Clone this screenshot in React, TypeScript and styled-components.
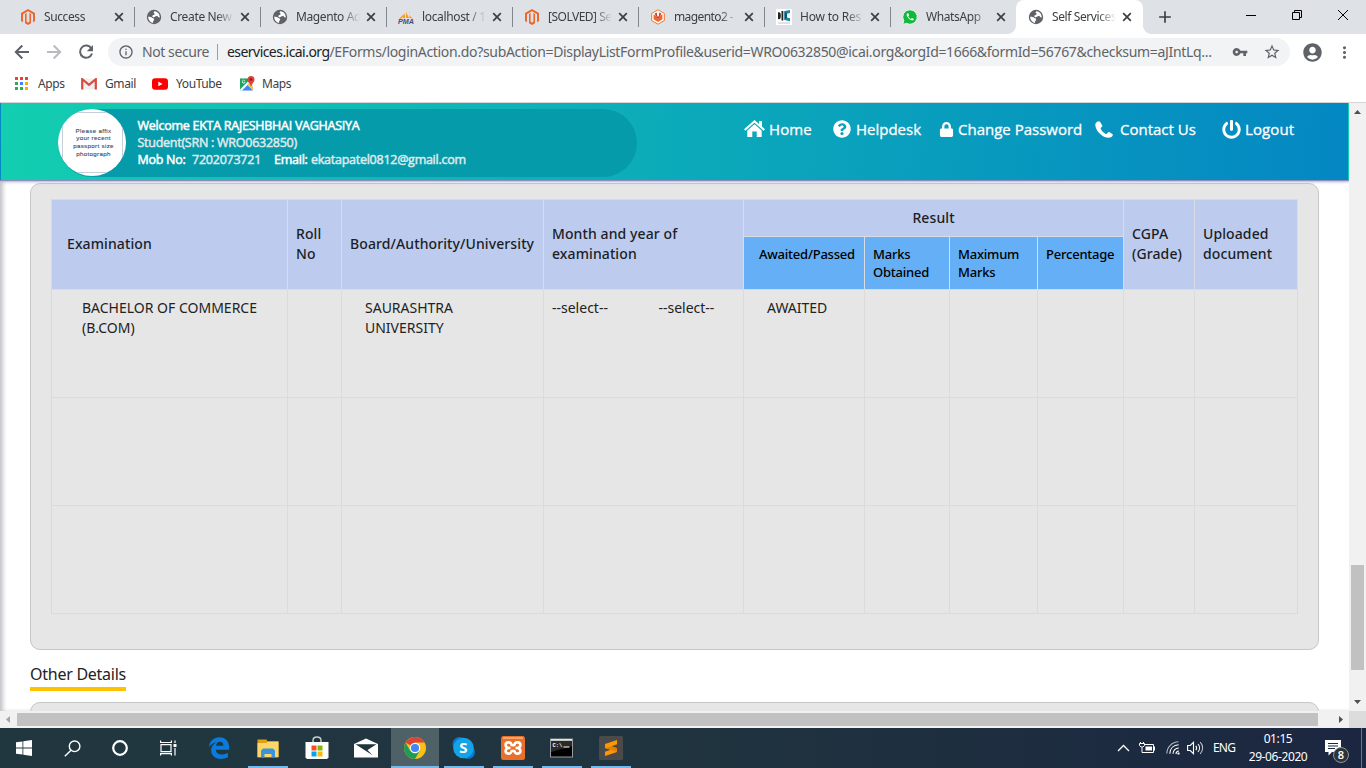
import React from 'react';
import styled, { createGlobalStyle, css } from 'styled-components';
import {
  MdVpnKey, MdStarBorder, MdMoreVert,
  MdInfoOutline, MdAdd,
} from 'react-icons/md';
import { FaQuestionCircle, FaLock, FaPowerOff, FaUserCircle } from 'react-icons/fa';

const Global = createGlobalStyle`
  * { box-sizing: border-box; }
  body { margin: 0; overflow: hidden; background: #fff; font-family: "Noto Sans", "Open Sans", sans-serif; }
  svg { display: block; flex: none; }
`;

const Screen = styled.div`
  width: 1366px;
  height: 768px;
  display: flex;
  flex-direction: column;
  overflow: hidden;
`;

/* ---------- browser chrome ---------- */

const TabStrip = styled.div`
  height: 34px;
  flex: none;
  display: flex;
  background: #dee1e6;
  padding-left: 9px;
`;

const Tab = styled.div<{ $active?: boolean; $beforeActive?: boolean }>`
  width: 126px;
  display: flex;
  align-items: center;
  padding: 0 0 0 11px;
  position: relative;
  ${p => !p.$active && !p.$beforeActive && css`
    &::after {
      content: '';
      width: 1px;
      height: 20px;
      margin-left: 10px;
      background: #80868b;
    }
  `}
  ${p => p.$active && css`
    width: 127px;
    margin-left: -1px;
    padding-left: 12px;
    background: #fff;
    border-radius: 8px 8px 0 0;
    &::before, &::after {
      content: '';
      position: absolute;
      bottom: 0;
      width: 8px;
      height: 8px;
    }
    &::before { left: -8px; background: radial-gradient(circle at 0 0, #dee1e6 7.5px, #fff 8px); }
    &::after { right: -8px; background: radial-gradient(circle at 100% 0, #dee1e6 7.5px, #fff 8px); }
  `}
`;

const TabTitle = styled.span<{ $ls?: number }>`
  width: 64px;
  flex: none;
  margin-left: 8px;
  overflow: hidden;
  white-space: nowrap;
  font-size: 12px;
  line-height: 18px;
  letter-spacing: ${p => p.$ls ?? -0.4}px;
  color: #3c4043;
  mask-image: linear-gradient(90deg, #000 72%, transparent 100%);
`;

const TabClose = styled.span`
  flex: none;
  margin-left: 6px;
`;

const NewTab = styled.div`
  display: flex;
  align-items: center;
  padding-left: 12px;
  color: #3c4043;
`;

const WindowButtons = styled.div`
  margin-left: auto;
  display: flex;
  align-items: center;
  height: 29px;
  gap: 34px;
  padding-right: 17px;
`;

const Toolbar = styled.div`
  height: 34px;
  flex: none;
  display: flex;
  align-items: center;
  padding: 2px 12px 0 14px;
  color: #5f6368;
`;

const NavButtons = styled.div`
  display: flex;
  gap: 16px;
  width: 94px;
`;

const Omnibox = styled.div`
  width: 1182px;
  height: 28px;
  border-radius: 14px;
  background: #f1f3f4;
  display: flex;
  align-items: center;
  padding: 0 9px 1px 10px;
  font-size: 14px;
  white-space: nowrap;
`;

const Security = styled.span`
  margin-left: 8px;
  width: 75px;
  letter-spacing: -0.42px;
`;

const OmniDivider = styled.span`
  width: 1px;
  height: 16px;
  background: #9aa0a6;
  margin-right: 9px;
`;

const Host = styled.span`
  color: #202124;
  letter-spacing: -0.55px;
`;

const Path = styled.span`
  letter-spacing: -0.32px;
  flex: 1;
`;

const OmniActions = styled.span`
  display: flex;
  align-items: center;
  gap: 15px;
`;

const ToolbarEnd = styled.div`
  display: flex;
  align-items: center;
  margin-left: 13px;
  gap: 13px;
`;

const Bookmarks = styled.div`
  height: 35px;
  flex: none;
  display: flex;
  align-items: center;
  padding: 0 0 3px 15px;
  border-bottom: 1px solid #d5d6d8;
`;

const Bookmark = styled.div<{ $w: number }>`
  width: ${p => p.$w}px;
  display: flex;
  align-items: center;
  font-size: 12px;
  letter-spacing: -0.4px;
  color: #3c4043;
`;

const BookmarkLabel = styled.span<{ $gap: number }>`
  margin-left: ${p => p.$gap}px;
`;

/* ---------- page ---------- */

const Viewport = styled.div`
  height: 608px;
  flex: none;
  display: flex;
`;

const Page = styled.div`
  width: 1349px;
  height: 608px;
  overflow: hidden;
  background: #fff;
  box-shadow: inset 4px 0 4px -1px #c4c4c8;
`;

const Banner = styled.header`
  height: 77px;
  display: flex;
  border: solid transparent;
  border-width: 0 1px;
  background: linear-gradient(96deg, #13ceb0 0%, #0487c3 100%);
  box-shadow: 0 1px 1px #8c8fbb, 0 2px 3px #b9bbdd;
  position: relative;
  font-family: "Open Sans", sans-serif;
`;

const ProfilePill = styled.div`
  width: 579px;
  height: 68px;
  margin: 6px 0 0 57px;
  border-radius: 34px;
  background: #069bab;
  display: flex;
`;

const Photo = styled.div`
  width: 68px;
  height: 67px;
  border-radius: 50%;
  background: #fff;
  display: flex;
  align-items: center;
  justify-content: center;
  text-align: center;
  overflow: hidden;
`;

const PhotoFrame = styled.div`
  width: 61px;
  height: 61px;
  flex: none;
  border: 1px solid #c5cedb;
  display: flex;
  align-items: center;
  justify-content: center;
  padding: 0 0 1px 3px;
  white-space: nowrap;
  font: 6.2px/7.7px "Liberation Sans", sans-serif;
  letter-spacing: 0.33px;
  color: #3a475c;
  -webkit-text-stroke: 0.1px #3a475c;
`;

const Identity = styled.div`
  margin: 7.5px 0 0 11.5px;
  font-size: 12.5px;
  line-height: 17px;
  letter-spacing: -0.26px;
  color: #dfe9ec;
  -webkit-text-stroke: 0.5px currentColor;
  white-space: nowrap;
`;

const Strong = styled.span<{ $before?: number; $after?: number }>`
  color: #fff;
  margin-left: ${p => p.$before ?? 0}px;
  margin-right: ${p => p.$after ?? 0}px;
`;

const Digits = styled.span`
  letter-spacing: -0.25px;
`;

const Menu = styled.nav`
  flex: 1;
  display: flex;
  padding: 15px 0 0 107px;
  height: 37px;
  align-items: center;
  color: #fff;
  font-size: 15px;
  line-height: 22px;
`;

const MenuItem = styled.a<{ $w: number; $gap: number; $ls?: number }>`
  width: ${p => p.$w}px;
  display: flex;
  align-items: center;
  gap: ${p => p.$gap}px;
  letter-spacing: ${p => p.$ls ?? 0}px;
  white-space: nowrap;
  -webkit-text-stroke: 0.3px #fff;
`;

const Panel = styled.section`
  width: 1289px;
  height: 467px;
  margin: 3px 0 0 30px;
  padding: 15px 20px 0;
  border: 1px solid #c6c6c6;
  border-radius: 10px;
  background: #e6e6e6;
`;

const NextPanel = styled(Panel)`
  margin-top: 11px;
`;

const Table = styled.div`
  width: 1247px;
  display: grid;
  grid-template-columns: 236px 54px 202px 200px 121px 85px 88px 86px 71px 103px;
  grid-template-rows: 37px 53px repeat(3, 108px);
  border: solid #d9dadb;
  border-width: 1px 0 0 1px;
  font-size: 14px;
  line-height: 20px;
`;

const Cell = styled.div<{ $pad?: number }>`
  border: solid #dbdbdb;
  border-width: 0 1px 1px 0;
  padding: 8px 8px 0 ${p => p.$pad ?? 8}px;
  color: #222;
`;

const HeadCell = styled(Cell)<{ $col: number }>`
  grid-row: 1 / span 2;
  grid-column: ${p => p.$col};
  display: flex;
  align-items: center;
  padding-top: 0;
  padding-bottom: 1px;
  background: #bdccee;
  border-color: #d9dce2;
  color: #1b1e26;
  font-weight: 500;
  letter-spacing: 0.1px;
`;

const GroupCell = styled(HeadCell)`
  grid-row: 1;
  grid-column: ${p => p.$col} / span 4;
  padding-bottom: 0;
  justify-content: center;
`;

const SubCell = styled(Cell)<{ $col: number }>`
  grid-row: 2;
  grid-column: ${p => p.$col};
  background: #64aff5;
  border-color: #d9dce2;
  padding-top: 8px;
  font-size: 13px;
  line-height: 18px;
  font-weight: 500;
  letter-spacing: -0.22px;
  color: #000;
`;

const DateCell = styled(Cell)`
  display: flex;
  gap: 50.5px;
`;

const SectionTitle = styled.h2`
  display: block;
  width: 96px;
  height: 30px;
  margin: 11px 0 0 30px;
  padding-top: 1px;
  border-bottom: 4px solid #ffc200;
  font-size: 16px;
  line-height: 24px;
  font-weight: 400;
  letter-spacing: -0.26px;
  color: #222;
  white-space: nowrap;
`;

const ScrollV = styled.div`
  width: 17px;
  height: 608px;
  background: #f1f1f1;
  display: flex;
  flex-direction: column;
  align-items: center;
  padding: 7px 0;
`;

const ThumbV = styled.div`
  width: 13px;
  height: 105px;
  margin-top: 451px;
  background: #c1c1c1;
`;

const ScrollH = styled.div`
  height: 17px;
  flex: none;
  background: #f1f1f1;
  display: flex;
  align-items: center;
  padding-left: 6px;
`;

const ThumbH = styled.div`
  width: 1301px;
  height: 13px;
  margin-left: 7px;
  background: #c1c1c1;
`;

const Corner = styled.div`
  width: 17px;
  height: 17px;
  margin-left: auto;
  background: #dcdcdc;
`;

const Arrow = styled.i<{ $dir: 'up' | 'down' | 'left' | 'right'; $dim?: boolean }>`
  flex: none;
  width: ${p => (p.$dir === 'up' || p.$dir === 'down' ? 7 : 4)}px;
  height: ${p => (p.$dir === 'up' || p.$dir === 'down' ? 4 : 7)}px;
  background: ${p => (p.$dim ? '#a3a3a3' : '#505050')};
  clip-path: ${p => ({
    up: 'polygon(50% 0, 100% 100%, 0 100%)',
    down: 'polygon(0 0, 100% 0, 50% 100%)',
    left: 'polygon(0 50%, 100% 0, 100% 100%)',
    right: 'polygon(0 0, 100% 50%, 0 100%)',
  }[p.$dir])};
`;

const DownArrow = styled(Arrow)`
  margin-top: auto;
`;

const RightArrow = styled(Arrow)`
  margin-left: 21px;
`;

/* ---------- taskbar ---------- */

const Taskbar = styled.div`
  height: 40px;
  flex: none;
  display: flex;
  background: linear-gradient(90deg, #21373f 0%, #20343f 50%, #1c2a40 85%, #1b2741 100%);
  color: #fff;
`;

const SystemKeys = styled.div`
  width: 195px;
  display: flex;
`;

const TaskSlot = styled.div<{ $open?: boolean; $active?: boolean }>`
  width: 48px;
  height: 40px;
  display: flex;
  align-items: center;
  justify-content: center;
  background:
    linear-gradient(#76b9ed, #76b9ed) center bottom / ${p => (p.$active ? 48 : p.$open ? 40 : 0)}px 2px no-repeat,
    ${p => (p.$active ? '#4d6167' : 'transparent')};
`;

const Apps = styled.div`
  display: flex;
  gap: 1px;
`;

const Tray = styled.div`
  margin-left: auto;
  display: flex;
  align-items: center;
  font-size: 12px;
  line-height: 18px;
`;

const TrayIcons = styled.div`
  display: grid;
  grid-template-columns: 22px 27px 21px 17px;
  align-items: center;
`;

const Lang = styled.span`
  width: 35px;
  margin-left: 9px;
  letter-spacing: -0.8px;
`;

const Clock = styled.div`
  width: 61px;
  text-align: center;
  letter-spacing: -0.4px;
  margin: -1px 0.5px 0 -0.5px;
`;

const Notifications = styled.div`
  position: relative;
  width: 36px;
  height: 40px;
  margin-left: 16px;
  padding-top: 12px;
`;

const Badge = styled.span`
  position: absolute;
  left: 8px;
  top: 19px;
  width: 16px;
  height: 16px;
  border-radius: 50%;
  border: 1px solid #92979c;
  background: #2e3338;
  font-size: 11px;
  line-height: 14px;
  font-weight: 600;
  text-align: center;
`;

const ShowDesktop = styled.div`
  width: 5px;
  height: 40px;
  border-left: 1px solid #6c7482;
`;

/* ---------- drawings ---------- */

const Magento = () => (
  <svg width="16" height="16" viewBox="0 0 16 16" fill="#ee672f">
    <path d="M8 0 1 4v8l2 1.200V5.200L8 2.300l5 2.900v8l2-1.200V4z" />
    <path d="M5 4.900v9.400L8 16l3-1.700V4.900L9.400 4v8.700L8 13.600l-1.400-.9V4z" />
  </svg>
);
const Pma = () => (
  <svg width="16" height="16" viewBox="0 0 16 16">
    <path d="M7 1c.5 3-.4 6-4 8.600L7 9zM8 3l3 6H8zM11.500 2c-.6 3-.2 5 3.500 7.500l-3.500-.4zM1 9.800 6 5 4.700 9.500z" fill="#f79a1c" />
    <text x="0" y="15.400" fontFamily="Liberation Sans, sans-serif" fontSize="6.600" fontWeight="700" fontStyle="italic" fill="#4a4a72" textLength="16" lengthAdjust="spacingAndGlyphs">PMA</text>
  </svg>
);
const Hexagon = () => (
  <svg width="16" height="16" viewBox="0 0 16 16">
    <path d="M8 .8 14.300 4.400v7.200L8 15.200 1.700 11.600V4.400z" fill="#fff" stroke="#f0752c" strokeWidth="1" />
    <path d="M3.600 5.300 6 6.800 8 10.500l2-3.700 2.400-1.500v4.900L8 13l-4.400-2.800z" fill="#f0652a" />
    <path d="M4.600 4.400 6.800 3.400 7 6.500 8 8l1-1.500.2-3.100 2.200 1L8 10.500z" fill="#c93a24" />
  </svg>
);
const DcLogo = () => (
  <svg width="16" height="16" viewBox="0 0 16 16">
    <path d="M0 0h16v16H0z" fill="#fff" />
    <path d="M2 3.500c2-.8 2.800.5 2.800 3.300S4 10.800 2 10zM5.500 2H7.300v9.500H5.500z" fill="#222" />
    <path d="M8.500 2 14 1v3l-3 .7v3.800l3 .8v3l-5.500-1.300z" fill="#1788ab" /><path d="M8.500 2 11 4.700v3.800L8.500 11z" fill="#0b5772" />
    <path d="M2 14h12" stroke="#c5c5c5" />
  </svg>
);
const WhatsApp = () => (
  <svg width="16" height="16" viewBox="0 0 16 16">
    <path d="M8 .8a7.200 7.200 0 1 1-3.500 13.500L.8 15.400l1-3.700A7.200 7.200 0 0 1 8 .8z" fill="#12b83c" stroke="#fff" strokeWidth=".8" />
    <path d="M5.500 4.200c-.9.500-1.100 1.600-.5 2.800 1 2.100 2.500 3.600 4.500 4.300 1 .3 2.200-.2 2.400-1.300l-2-1.100-1 1c-1.300-.6-2-1.400-2.600-2.500l.8-.9-.8-2.200z" fill="#fff" />
  </svg>
);
const Globe = () => (
  <svg width="16" height="16" viewBox="0 0 16 16">
    <circle cx="8" cy="8" r="7.200" fill="#5f6368" />
    <path d="M8.200 2.200c2 .1 3.800 1.200 4.800 2.800l.9 3.200c-.7.500-1.500.1-1.900-.5l-.8-1-2 .7-1.700 1.100-1.300-1 .5-1.200 1.600-.6.200-1.400-1-.6z" fill="#fff" />
    <path d="M2.200 7.600c1.500.2 3.200.4 4.300 1.500.6.500 1.500.5 1.700 1.300.1.900-1 1.100-1.100 1.900v1.600A6 6 0 0 1 2.200 7.600z" fill="#fff" />
  </svg>
);
const CloseTab = () => <svg width="10" height="10"><path d="m1.200 1.200 7.600 7.600M8.800 1.200 1.200 8.800" stroke="#3c4043" strokeWidth="1.700" /></svg>;
const Back = () => (
  <svg width="16" height="16" fill="none" stroke="#5f6368" strokeWidth="2"><path d="M15 8H2M8.300 1.500 1.800 8l6.500 6.500" /></svg>
);
const Forward = () => (
  <svg width="16" height="16" fill="none" stroke="#b9bbbe" strokeWidth="2"><path d="M1 8h13M7.700 1.500 14.200 8l-6.500 6.500" /></svg>
);
const Reload = () => (
  <svg width="16" height="16" fill="none" stroke="#5f6368" strokeWidth="2">
    <path d="M13.400 4.500A6.100 6.100 0 1 0 14 9.500" /><path d="M15 1v6.200H8.800z" fill="#5f6368" stroke="none" />
  </svg>
);
const AppsGrid = () => (
  <svg width="13" height="13" viewBox="0 0 13 13">
    <path d="M0 0h3v3H0zM5 0h3v3H5zM10 0h3v3h-3z" fill="#ea4335" />
    <path d="M0 5h3v3H0z" fill="#34a853" /><path d="M5 5h3v3H5z" fill="#4285f4" /><path d="M10 5h3v3h-3z" fill="#f9ab00" />
    <path d="M0 10h3v3H0zM5 10h3v3H5z" fill="#34a853" /><path d="M10 10h3v3h-3z" fill="#f9ab00" />
  </svg>
);
const Gmail = () => (
  <svg width="16" height="12" viewBox="0 0 16 12">
    <path d="M1 .5h14v11H1z" fill="#eee" />
    <path d="M1.200 11.500V1.200L8 6.800l6.800-5.600v10.300" fill="none" stroke="#d84b3e" strokeWidth="2.200" />
  </svg>
);
const YouTube = () => (
  <svg width="16" height="12" viewBox="0 0 16 12">
    <rect width="16" height="11.500" rx="3" y=".2" fill="#f00" /><path d="m6.300 3.500 4.200 2.400-4.200 2.400z" fill="#fff" />
  </svg>
);
const Maps = () => (
  <svg width="16" height="16" viewBox="0 0 16 16">
    <path d="M1 2.500h13v12H1z" fill="#e5e5e5" /><path d="M1 2.500h8l2 4-10 8z" fill="#1da462" />
    <path d="M2 14.500 8 8.500l6 6z" fill="#4285f4" /><path d="m1 13.500 8-8 1.500 1.500L2.500 15z" fill="#fff" /><path d="m8.500 8.500 1.500-1.500 4 4v3.500z" fill="#f6c736" />
    <path d="M12 0a3.500 3.500 0 0 1 3.500 3.500C15.500 6 13 7 12 11 11 7 8.500 6 8.500 3.500A3.500 3.500 0 0 1 12 0z" fill="#dc4437" /><circle cx="12" cy="3.500" r="1.300" fill="#7d2218" />
    <path d="M5.800 4.700a1.500 1.500 0 1 0 .3 1.500H4.800" fill="none" stroke="#fff" strokeWidth=".7" />
  </svg>
);
const Minimise = () => <svg width="12" height="12"><path d="M1 6.500h10" stroke="#000" /></svg>;
const Restore = () => (
  <svg width="12" height="12" fill="none" stroke="#000"><path d="M1.500 3.500h7v7h-7zM3.500 3.500v-2h7v7h-2" /></svg>
);
const CloseWindow = () => <svg width="12" height="12"><path d="m1 1 10 10M11 1 1 11" stroke="#000" /></svg>;

const House = () => (
  <svg width="21" height="18" viewBox="0 0 21 18" fill="#fff">
    <path d="M10.500 0 0 9.300l1.400 1.500 9.100-8 9.100 8L21 9.300l-3-2.700V1h-3v3z" />
    <path d="m10.500 4.300-7.200 6.300V17h5v-5.500h4.400V17h5v-6.400z" />
  </svg>
);
const Handset = () => (
  <svg width="18" height="17" viewBox="0 0 18 17" fill="#fff">
    <path d="M3.600.2C1.800.5.2 1.900.3 3.900c.3 5.900 7 12.800 13.400 12.900 1.900 0 3.700-1 4.100-2.700.1-.5 0-.8-.4-1.100l-3.200-1.900c-.4-.2-.8-.1-1.100.2l-1.200 1.400c-.3.400-.8.400-1.200.2-2.300-1.200-4.100-2.900-5-5.100-.2-.4 0-.8.300-1.100L7.100 5.500c.3-.3.3-.6.200-1L5 .8C4.700.3 4.200.1 3.600.2z" />
  </svg>
);

const Windows = () => (
  <svg width="16" height="16" viewBox="0 0 16 16" fill="#fff">
    <path d="M0 2.300 6.500 1.400v6.200H0zM7.300 1.300 16 0v7.600H7.300zM0 8.400h6.500v6.200L0 13.700zM7.300 8.400H16V16l-8.700-1.300z" />
  </svg>
);
const Search = () => (
  <svg width="17" height="17" fill="none" stroke="#fff" strokeWidth="1.400"><circle cx="10.600" cy="6.300" r="5.300" /><path d="M7 10.200.8 16.300" /></svg>
);
const Cortana = () => <svg width="18" height="18"><circle cx="9" cy="9" r="6.800" fill="none" stroke="#fff" strokeWidth="2.200" /></svg>;
const TaskView = () => (
  <svg width="17" height="16" fill="none" stroke="#fff" strokeWidth="1.200">
    <path d="M1 4.600h10v7H1zM.600.500v2h10.800v-2M.600 15.600v-2h10.800v2M15 .500V3M15 8v7.600" /><path d="M13.500 4h3v3h-3z" fill="#fff" stroke="none" />
  </svg>
);
const Edge = () => (
  <svg width="22" height="22" viewBox="-0.500 0 22 22" fill="#0a7bdb">
    <path d="M.300 10C1.200 4 5.300.2 11 .2c6.200 0 9.700 4.500 9.700 10.300v2.200H7.300c.2 3.100 2.800 4.900 6 4.900 2.200 0 4.200-.7 6.100-1.800v4.400c-2.100 1.200-4.600 1.700-7.200 1.700C6.500 21.900 2.700 18.500 2.700 13.500c0-3.900 2.200-6.800 5.800-8.200C5.200 5.700 2.300 7.300.300 10zM7.400 8.800h7.500c0-2.600-1.300-4.100-3.500-4.100S7.800 6.400 7.400 8.800z" />
  </svg>
);
const Explorer = () => (
  <svg width="22" height="19" viewBox="0 0 22 19">
    <path d="M.500.500h9l1 2h11v16H.500z" fill="#e0a010" /><path d="M.500 4h9l1-1.500h11v15.500H.500z" fill="#fdd667" />
    <path d="M4 18.500v-7L6 9.500h10l2 2v7h-3.500V15h-7v3.500z" fill="#3a94db" />
  </svg>
);
const Store = () => (
  <svg width="24" height="24" viewBox="0 0 24 24">
    <path d="M8 6V4.500C8 2.500 9.500 1 12 1s4 1.500 4 3.500V6" fill="none" stroke="#c8d0d2" strokeWidth="1.400" /><path d="M.500 6h23v15.500l-1.500 1.500H2L.500 21.500z" fill="#fff" />
    <path d="M6.500 9.500h5v5h-5z" fill="#f25022" /><path d="M12.500 9.500h5v5h-5z" fill="#7fba00" /><path d="M6.500 15.500h5v5h-5z" fill="#00a4ef" /><path d="M12.500 15.500h5v5h-5z" fill="#ffb900" />
  </svg>
);
const Mail = () => (
  <svg width="24" height="20" viewBox="0 0 24 20"><path d="M0 6 12 .500 24 6v13.500H0z" fill="#fff" /><path d="M1.500 6.200h21L13.500 12l5 5.200L1.500 6.200z" fill="#20343c" /></svg>
);
const Chrome = () => (
  <svg width="22" height="22" viewBox="0 0 22 22">
    <circle cx="11" cy="11" r="11" fill="#fbc116" />
    <path d="M11 11 1.500 5.500A11 11 0 0 1 20.500 5.500H11z" fill="#dc4437" />
    <path d="M1.500 5.500A11 11 0 0 0 11 22l4.800-8.300L6.200 13.700z" fill="#1b9d58" />
    <circle cx="11" cy="11" r="5.200" fill="#fff" /><circle cx="11" cy="11" r="4.100" fill="#4285f4" />
  </svg>
);
const Skype = () => (
  <svg width="24" height="24" viewBox="0.500 0 24 24">
    <circle cx="8" cy="8" r="7" fill="#0b77c5" /><circle cx="16.500" cy="16" r="7" fill="#0b77c5" /><circle cx="12" cy="12" r="10.300" fill="#14a3e6" />
    <text x="12" y="17.300" textAnchor="middle" fontFamily="Open Sans, sans-serif" fontWeight="700" fontSize="15" fill="#fff">S</text>
  </svg>
);
const Xampp = () => (
  <svg width="24" height="24" viewBox="0 0 24 24">
    <rect width="24" height="24" rx="2.500" fill="#e8702a" /><path d="M2 1h20v2H2z" fill="#f4a56c" />
    <path d="M9.500 12H7.500C5.500 11.600 4.600 10.500 4.600 9c0-3.300 5-3.600 5.900-.5 0 1 3 1 3 0 .9-3.100 5.900-2.800 5.900.5 0 1.500-.9 2.600-2.900 3H14.500M16.500 12c2 .4 2.900 1.500 2.900 3 0 3.300-5 3.600-5.900.5 0-1-3-1-3 0-.9 3.100-5.900 2.800-5.900-.5 0-1.500.9-2.600 2.900-3" fill="none" stroke="#fff" strokeWidth="2.600" strokeLinejoin="round" />
  </svg>
);
const Terminal = () => (
  <svg width="24" height="20" viewBox="0 0 24 20">
    <path d="M0 .500h23v19H0z" fill="#9a9a9a" /><path d="M1 3h21v15.500H1z" fill="#000" /><path d="M1 1h21v1.600H1z" fill="#dfe4e8" />
    <path d="M1 3h21v5L1 14z" fill="#2a2a2a" />
    <text x="2.500" y="9" fontFamily="Liberation Mono, monospace" fontSize="5.500" fontWeight="700" fill="#fff">C:\</text><path d="M13.500 9h6" stroke="#fff" />
  </svg>
);
const Sublime = () => (
  <svg width="24" height="24" viewBox="0 0 24 24">
    <rect width="24" height="24" rx="1.500" fill="#4a4a4a" />
    <path d="M18 4v4.300l-5.500 1.900 5.500 2v3.700L6 20v-4.200l5.600-2L6 11.900V8z" fill="#ff9800" /><path d="m6 11.900 12 3.900v-3.600l-5.500-2z" fill="#e08200" />
  </svg>
);
const Chevron = () => <svg width="13" height="8" fill="none" stroke="#fff" strokeWidth="1.300"><path d="m1 7 5.500-5.500L12 7" /></svg>;
const Battery = () => (
  <svg width="16" height="12" fill="none" stroke="#fff" strokeWidth="1">
    <path d="M6 2.500h8.500v8H5M3 5.500v5h2M15.500 4.500v4M.500 1.500h5v2L4 5H2L.500 3.500zM1.500 0v1.500M4.500 0v1.500" /><path d="M6.500 4.500h6.500v4H6.500z" fill="#fff" stroke="none" />
  </svg>
);
const Wifi = () => (
  <svg width="14" height="14" fill="none" stroke="#fff" strokeWidth="1.100">
    <path d="M.800 12.500C1 6 6 1 12.500.800" opacity=".65" /><path d="M3.800 12.700C4 7.500 7.500 4 12.700 3.800M7 12.800C7 9.500 9.500 7 12.800 7M10 13c0-2 1-3 3-3" /><path d="M11.500 11.500h2v2h-2z" fill="#fff" stroke="none" />
  </svg>
);
const Volume = () => (
  <svg width="17" height="14" fill="none" stroke="#fff" strokeWidth="1.100">
    <path d="M.600 4.500h2.600L6.500 1.300v11.400L3.200 9.500H.600zM8.800 4.800c1 1.300 1 3.100 0 4.400M11 3c2 2.300 2 5.700 0 8" /><path d="M13.200 1.200c3.200 3.300 3.200 8.300 0 11.600" opacity=".7" />
  </svg>
);
const Message = () => (
  <svg width="16" height="16"><path d="M0 0h16v12H7l-3.500 3.500V12H0z" fill="#fff" /><path d="M3 3.500h10M3 6h10M3 8.500h7" stroke="#1b2741" /></svg>
);

const tabs: { icon: React.ReactNode; title: string; ls?: number }[] = [
  { icon: <Magento />, title: 'Success' },
  { icon: <Globe />, title: 'Create New', ls: -0.35 },
  { icon: <Globe />, title: 'Magento Ad', ls: -0.4 },
  { icon: <Pma />, title: 'localhost / 1', ls: -0.35 },
  { icon: <Magento />, title: '[SOLVED] Se', ls: -0.5 },
  { icon: <Hexagon />, title: 'magento2 -', ls: -0.6 },
  { icon: <DcLogo />, title: 'How to Res', ls: -0.2 },
  { icon: <WhatsApp />, title: 'WhatsApp' },
  { icon: <Globe />, title: 'Self Services', ls: -0.4 },
];

export default function App() {
  return (
    <Screen>
      <Global />
      <TabStrip>
        {tabs.map((t, i) => (
          <Tab key={i} $active={i === 8} $beforeActive={i === 7}>
            {t.icon}
            <TabTitle $ls={t.ls}>{t.title}</TabTitle>
            <TabClose><CloseTab /></TabClose>
          </Tab>
        ))}
        <NewTab><MdAdd size={20} /></NewTab>
        <WindowButtons><Minimise /><Restore /><CloseWindow /></WindowButtons>
      </TabStrip>

      <Toolbar>
        <NavButtons><Back /><Forward /><Reload /></NavButtons>
        <Omnibox>
          <MdInfoOutline size={16} />
          <Security>Not secure</Security>
          <OmniDivider />
          <Host>eservices.icai.org</Host>
          <Path>/EForms/loginAction.do?subAction=DisplayListFormProfile&amp;userid=WRO0632850@icai.org&amp;orgId=1666&amp;formId=56767&amp;checksum=aJIntLq...</Path>
          <OmniActions><MdVpnKey size={16} /><MdStarBorder size={18} /></OmniActions>
        </Omnibox>
        <ToolbarEnd><FaUserCircle size={19} /><MdMoreVert size={19} /></ToolbarEnd>
      </Toolbar>

      <Bookmarks>
        <Bookmark $w={66}><AppsGrid /><BookmarkLabel $gap={10}>Apps</BookmarkLabel></Bookmark>
        <Bookmark $w={71}><Gmail /><BookmarkLabel $gap={8}>Gmail</BookmarkLabel></Bookmark>
        <Bookmark $w={87}><YouTube /><BookmarkLabel $gap={8}>YouTube</BookmarkLabel></Bookmark>
        <Bookmark $w={60}><Maps /><BookmarkLabel $gap={7}>Maps</BookmarkLabel></Bookmark>
      </Bookmarks>

      <Viewport>
        <Page>
          <Banner>
            <ProfilePill>
              <Photo><PhotoFrame>Please affix<br />your recent<br />passport size<br />photograph</PhotoFrame></Photo>
              <Identity>
                <Strong>Welcome EKTA RAJESHBHAI VAGHASIYA</Strong><br />
                Student(SRN : WRO0632850)<br />
                <Strong $after={6.5}>Mob No:</Strong><Digits>7202073721</Digits>
                <Strong $before={13} $after={3.5}>Email:</Strong>ekatapatel0812@gmail.com
              </Identity>
            </ProfilePill>
            <Menu>
              <MenuItem $w={89} $gap={4} $ls={0.1}><House />Home</MenuItem>
              <MenuItem $w={106} $gap={5}><FaQuestionCircle size={18} />Helpdesk</MenuItem>
              <MenuItem $w={156} $gap={4}><FaLock size={15} />Change Password</MenuItem>
              <MenuItem $w={127} $gap={7}><Handset />Contact Us</MenuItem>
              <MenuItem $w={80} $gap={4} $ls={0.1}><FaPowerOff size={19} />Logout</MenuItem>
            </Menu>
          </Banner>

          <Panel>
            <Table>
              <HeadCell $col={1} $pad={15}>Examination</HeadCell>
              <HeadCell $col={2}>Roll<br />No</HeadCell>
              <HeadCell $col={3}>Board/Authority/University</HeadCell>
              <HeadCell $col={4}>Month and year of<br />examination</HeadCell>
              <GroupCell $col={5}>Result</GroupCell>
              <SubCell $col={5} $pad={15}>Awaited/Passed</SubCell>
              <SubCell $col={6}>Marks<br />Obtained</SubCell>
              <SubCell $col={7}>Maximum<br />Marks</SubCell>
              <SubCell $col={8}>Percentage</SubCell>
              <HeadCell $col={9}>CGPA<br />(Grade)</HeadCell>
              <HeadCell $col={10}>Uploaded<br />document</HeadCell>

              <Cell $pad={30}>BACHELOR OF COMMERCE<br />(B.COM)</Cell>
              <Cell />
              <Cell $pad={23}>SAURASHTRA<br />UNIVERSITY</Cell>
              <DateCell><span>--select--</span><span>--select--</span></DateCell>
              <Cell $pad={23}>AWAITED</Cell>
              {Array.from({ length: 25 }, (_, i) => <Cell key={i} />)}
            </Table>
          </Panel>

          <SectionTitle>Other Details</SectionTitle>
          <NextPanel />
        </Page>
        <ScrollV>
          <Arrow $dir="up" />
          <ThumbV />
          <DownArrow $dir="down" />
        </ScrollV>
      </Viewport>

      <ScrollH>
        <Arrow $dir="left" $dim />
        <ThumbH />
        <RightArrow $dir="right" />
        <Corner />
      </ScrollH>

      <Taskbar>
        <SystemKeys>
          <TaskSlot><Windows /></TaskSlot>
          <TaskSlot><Search /></TaskSlot>
          <TaskSlot><Cortana /></TaskSlot>
          <TaskSlot><TaskView /></TaskSlot>
        </SystemKeys>
        <Apps>
          <TaskSlot><Edge /></TaskSlot>
          <TaskSlot $open><Explorer /></TaskSlot>
          <TaskSlot><Store /></TaskSlot>
          <TaskSlot><Mail /></TaskSlot>
          <TaskSlot $active><Chrome /></TaskSlot>
          <TaskSlot $open><Skype /></TaskSlot>
          <TaskSlot $open><Xampp /></TaskSlot>
          <TaskSlot $open><Terminal /></TaskSlot>
          <TaskSlot $open><Sublime /></TaskSlot>
        </Apps>
        <Tray>
          <TrayIcons><Chevron /><Battery /><Wifi /><Volume /></TrayIcons>
          <Lang>ENG</Lang>
          <Clock>01:15<br />29-06-2020</Clock>
          <Notifications><Message /><Badge>8</Badge></Notifications>
          <ShowDesktop />
        </Tray>
      </Taskbar>
    </Screen>
  );
}
